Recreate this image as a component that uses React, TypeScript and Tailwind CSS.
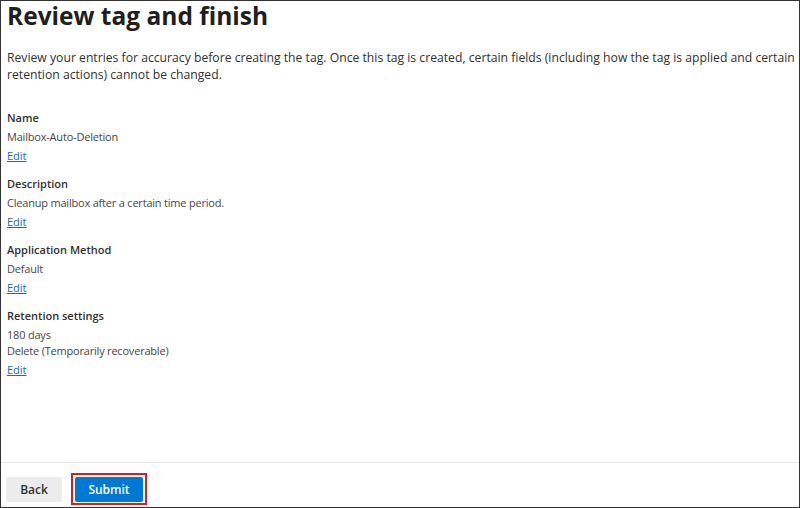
const sections = [
  { label: "Name", values: ["Mailbox-Auto-Deletion"] },
  { label: "Description", values: ["Cleanup mailbox after a certain time period."] },
  { label: "Application Method", values: ["Default"] },
  { label: "Retention settings", values: ["180 days", "Delete (Temporarily recoverable)"] },
];

const ReviewSection = ({ label, values }: { label: string; values: string[] }) => (
  <div className="mb-[12px]">
    <div className="text-[11px] leading-[16px] font-semibold text-[#323130] mb-[3px]">{label}</div>
    {values.map((v, i) => (
      <div key={i} className="text-[11px] leading-[16px] tracking-[-0.2px] text-[#484644]">
        {v}
      </div>
    ))}
    <a href="#" className="block mt-[3px] text-[11px] leading-[16px] text-[#0f6cbd] underline w-fit">
      Edit
    </a>
  </div>
);

export default function App() {
  return (
    <div
      className="w-[800px] h-[508px] bg-white border border-[#333333] flex flex-col overflow-hidden"
      style={{ fontFamily: '"Open Sans", "Noto Sans", sans-serif' }}
    >
      <div className="flex-1 px-[6px]">
        <h1 className="text-[24.5px] leading-[32px] font-bold text-[#201f1e] mt-[-1px]">Review tag and finish</h1>
        <p className="mt-[17px] text-[12.2px] leading-[17px] text-[#323130]">
          <span className="block whitespace-nowrap">
            Review your entries for accuracy before creating the tag. Once this tag is created, certain fields (including how the tag is applied and certain
          </span>
          <span className="block whitespace-nowrap">retention actions) cannot be changed.</span>
        </p>
        <div className="mt-[27px]">
          {sections.map((s) => (
            <ReviewSection key={s.label} label={s.label} values={s.values} />
          ))}
        </div>
      </div>
      <div className="border-t border-[#e6e6e6] h-[45px] flex items-start px-[5px] gap-[9px] pt-[10px]">
        <button className="mt-[4px] h-[25px] w-[56px] bg-[#ececec] text-[12px] font-semibold text-[#323130] rounded-[2px]">
          Back
        </button>
        <div className="border-2 border-[#c4262e] pt-[2px] px-[2px] pb-[1px]">
          <button className="h-[25px] w-[68px] bg-[#0078d4] text-[12px] font-semibold text-white rounded-[2px] block">
            Submit
          </button>
        </div>
      </div>
    </div>
  );
}
